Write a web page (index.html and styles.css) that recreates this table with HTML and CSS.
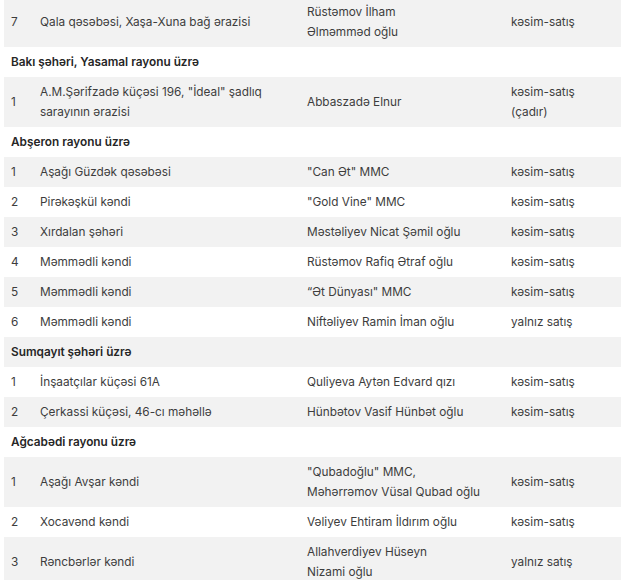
FILE: index.html
```html
<!DOCTYPE html>
<html lang="az">
<head>
<meta charset="utf-8">
<title>Siyahı</title>
<link rel="stylesheet" href="styles.css">
</head>
<body>
<div class="wrap">
<table class="list">
<colgroup>
<col class="c-num"><col class="c-loc"><col class="c-name"><col class="c-type">
</colgroup>
<tbody>
<tr><td>7</td><td>Qala qəsəbəsi, Xaşa-Xuna bağ ərazisi</td><td>Rüstəmov İlham<br>Əlməmməd oğlu</td><td>kəsim-satış</td></tr>
<tr class="head"><td colspan="4">Bakı şəhəri, Yasamal rayonu üzrə</td></tr>
<tr><td>1</td><td>A.M.Şərifzadə küçəsi 196, "İdeal" şadlıq<br>sarayının ərazisi</td><td>Abbaszadə Elnur</td><td>kəsim-satış<br>(çadır)</td></tr>
<tr class="head"><td colspan="4">Abşeron rayonu üzrə</td></tr>
<tr><td>1</td><td>Aşağı Güzdək qəsəbəsi</td><td>"Can Ət" MMC</td><td>kəsim-satış</td></tr>
<tr><td>2</td><td>Pirəkəşkül kəndi</td><td>"Gold Vine" MMC</td><td>kəsim-satış</td></tr>
<tr><td>3</td><td>Xırdalan şəhəri</td><td>Məstəliyev Nicat Şəmil oğlu</td><td>kəsim-satış</td></tr>
<tr><td>4</td><td>Məmmədli kəndi</td><td>Rüstəmov Rafiq Ətraf oğlu</td><td>kəsim-satış</td></tr>
<tr><td>5</td><td>Məmmədli kəndi</td><td>“Ət Dünyası" MMC</td><td>kəsim-satış</td></tr>
<tr><td>6</td><td>Məmmədli kəndi</td><td>Niftəliyev Ramin İman oğlu</td><td>yalnız satış</td></tr>
<tr class="head"><td colspan="4">Sumqayıt şəhəri üzrə</td></tr>
<tr><td>1</td><td>İnşaatçılar küçəsi 61A</td><td>Quliyeva Aytən Edvard qızı</td><td>kəsim-satış</td></tr>
<tr><td>2</td><td>Çerkassi küçəsi, 46-cı məhəllə</td><td>Hünbətov Vasif Hünbət oğlu</td><td>kəsim-satış</td></tr>
<tr class="head"><td colspan="4">Ağcabədi rayonu üzrə</td></tr>
<tr><td>1</td><td>Aşağı Avşar kəndi</td><td>"Qubadoğlu" MMC,<br>Məhərrəmov Vüsal Qubad oğlu</td><td>kəsim-satış</td></tr>
<tr><td>2</td><td>Xocavənd kəndi</td><td>Vəliyev Ehtiram İldırım oğlu</td><td>kəsim-satış</td></tr>
<tr><td>3</td><td>Rəncbərlər kəndi</td><td>Allahverdiyev Hüseyn<br>Nizami oğlu</td><td>yalnız satış</td></tr>
</tbody>
</table>
</div>
</body>
</html>
```

FILE: styles.css
```css
html, body {
  margin: 0;
  padding: 0;
  background: #ffffff;
}
body {
  font-family: Inter, "Noto Sans", sans-serif;
  font-size: 11.8px;
  color: #3d3d3d;
  overflow: hidden;
}
.wrap {
  padding: 0 5px 0 4px;
  margin-top: -3.3px;
}
.list {
  width: 617px;
  border-collapse: collapse;
  table-layout: fixed;
}
.c-num { width: 29px; }
.c-loc { width: 267px; }
.c-name { width: 204px; }
.c-type { width: 117px; }
.list td {
  padding: 5px 7px;
  line-height: 20px;
  vertical-align: middle;
  white-space: nowrap;
}
.list tr:nth-child(odd) {
  background: #f2f2f2;
}
.list tr.head td {
  font-weight: 600;
  color: #262626;
}
```
